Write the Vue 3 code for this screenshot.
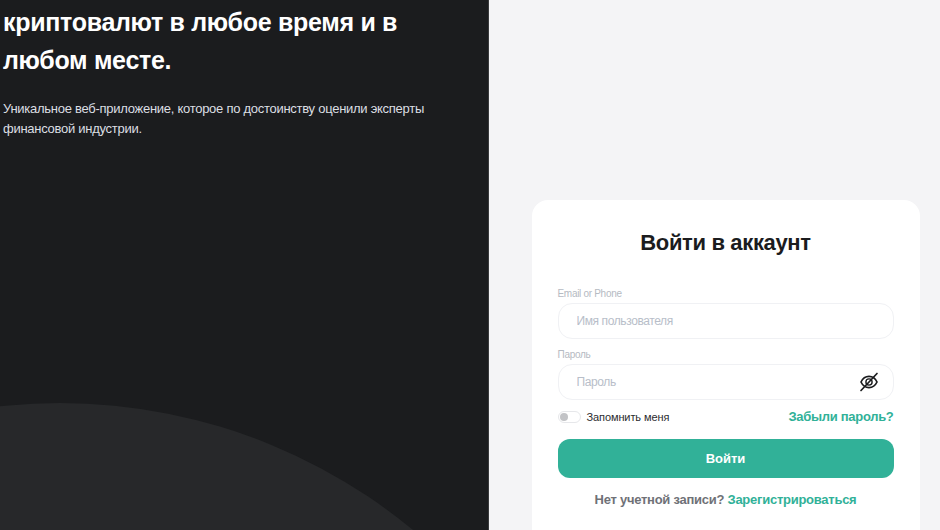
<template>
  <div class="page">
    <!-- Left promo panel -->
    <section class="promo">
      <div class="promo-circle"></div>
      <h1 class="promo-title">криптовалют в любое время и в<br />любом месте.</h1>
      <p class="promo-text">Уникальное веб-приложение, которое по достоинству оценили эксперты финансовой индустрии.</p>
    </section>

    <!-- Login -->
    <section class="side">
      <form class="card" @submit.prevent>
        <h2 class="card-title">Войти в аккаунт</h2>

        <label class="field-label">Email or Phone</label>
        <div class="field">
          <input v-model="login" class="field-input" type="text" placeholder="Имя пользователя" />
        </div>

        <label class="field-label second">Пароль</label>
        <div class="field">
          <input v-model="password" class="field-input" type="password" placeholder="Пароль" />
          <svg class="eye" width="20" height="20" viewBox="0 0 20 20" fill="none" stroke="#1b1c1e" stroke-width="1.7" stroke-linecap="round">
            <path d="M2 10c1.600-3.400 4.600-5.600 8-5.600s6.400 2.200 8 5.600c-1.600 3.400-4.600 5.600-8 5.600S3.600 13.400 2 10z" />
            <circle cx="10" cy="10" r="3.100" stroke-width="1.400" />
            <path d="M18 1.500 2 18.500" />
          </svg>
        </div>

        <div class="row">
          <div class="remember">
            <span class="switch"><span class="knob"></span></span>
            <span>Запомнить меня</span>
          </div>
          <a class="link forgot">Забыли пароль?</a>
        </div>

        <button class="submit" type="submit">Войти</button>

        <p class="signup">Нет учетной записи? <a class="link">Зарегистрироваться</a></p>
      </form>
    </section>
  </div>
</template>

<script setup>
import { ref } from 'vue'

const login = ref('')
const password = ref('')
</script>

<style>
html, body { margin: 0; overflow: hidden; }
</style>

<style scoped>
.page {
  display: flex;
  width: 940px;
  height: 530px;
  overflow: hidden;
  font-family: "Liberation Sans", Arial, sans-serif;
  background: #f4f4f6;
}

.promo {
  position: relative;
  width: 489px;
  flex-shrink: 0;
  box-sizing: border-box;
  padding: 3px 30px 0 3px;
  background: #1b1c1e;
  border-right: 1px solid #3a3b3d;
  overflow: hidden;
  color: #fff;
}

.promo-circle {
  position: absolute;
  left: -494px;
  top: 403px;
  width: 1108px;
  height: 1108px;
  border-radius: 50%;
  background: #27282a;
}

.promo-title {
  position: relative;
  margin: 0;
  font-size: 25px;
  line-height: 38px;
  font-weight: 700;
  letter-spacing: -0.3px;
}

.promo-text {
  position: relative;
  margin: 20px 0 0;
  font-size: 13px;
  line-height: 20px;
  letter-spacing: -0.27px;
  color: #dcdfe3;
}

.side {
  flex: 1;
  padding: 200px 20px 0 42.5px;
}

.card {
  box-sizing: border-box;
  width: 388px;
  height: 360px;
  padding: 30px 26px 0;
  background: #fff;
  border-radius: 16px;
}

.card-title {
  margin: 0 0 32px;
  font-size: 22px;
  line-height: 26px;
  font-weight: 700;
  letter-spacing: -0.35px;
  text-align: center;
  color: #1b1c1e;
}

.field-label {
  display: block;
  margin-bottom: 3px;
  font-size: 10px;
  line-height: 12px;
  letter-spacing: -0.3px;
  color: #b5bac2;
}

.field-label.second { margin-top: 10px; }

.field {
  display: flex;
  align-items: center;
  box-sizing: border-box;
  height: 36px;
  padding: 0 14px 0 18px;
  border: 1px solid #f0f1f4;
  border-radius: 14px;
}

.field-input {
  flex: 1;
  min-width: 0;
  padding: 0;
  border: 0;
  outline: 0;
  background: transparent;
  font-family: inherit;
  font-size: 12px;
  letter-spacing: -0.4px;
  color: #1b1c1e;
}

.field-input::placeholder { color: #b8bec9; opacity: 1; }

.eye { flex-shrink: 0; }

.row {
  display: flex;
  justify-content: space-between;
  align-items: center;
  margin-top: 9px;
}

.remember {
  display: flex;
  align-items: center;
  gap: 6px;
  font-size: 11px;
  letter-spacing: -0.1px;
  color: #2b2c2f;
}

.switch {
  display: flex;
  align-items: center;
  box-sizing: border-box;
  width: 23px;
  height: 12px;
  padding-left: 1px;
  border: 1px solid #e6e7ea;
  border-radius: 6px;
}

.knob {
  width: 8px;
  height: 8px;
  border-radius: 50%;
  background: #c2c3c6;
}

.link {
  color: #31b198;
  font-weight: 700;
}

.forgot {
  font-size: 13px;
  letter-spacing: -0.3px;
}

.submit {
  display: block;
  width: 100%;
  height: 39px;
  margin-top: 15px;
  border: 0;
  border-radius: 12px;
  background: #31b198;
  color: #fff;
  font-family: inherit;
  font-size: 13px;
  font-weight: 700;
}

.signup {
  margin: 14px 0 0;
  font-size: 13px;
  line-height: 16px;
  font-weight: 700;
  letter-spacing: -0.26px;
  text-align: center;
  color: #6f7177;
}
</style>
